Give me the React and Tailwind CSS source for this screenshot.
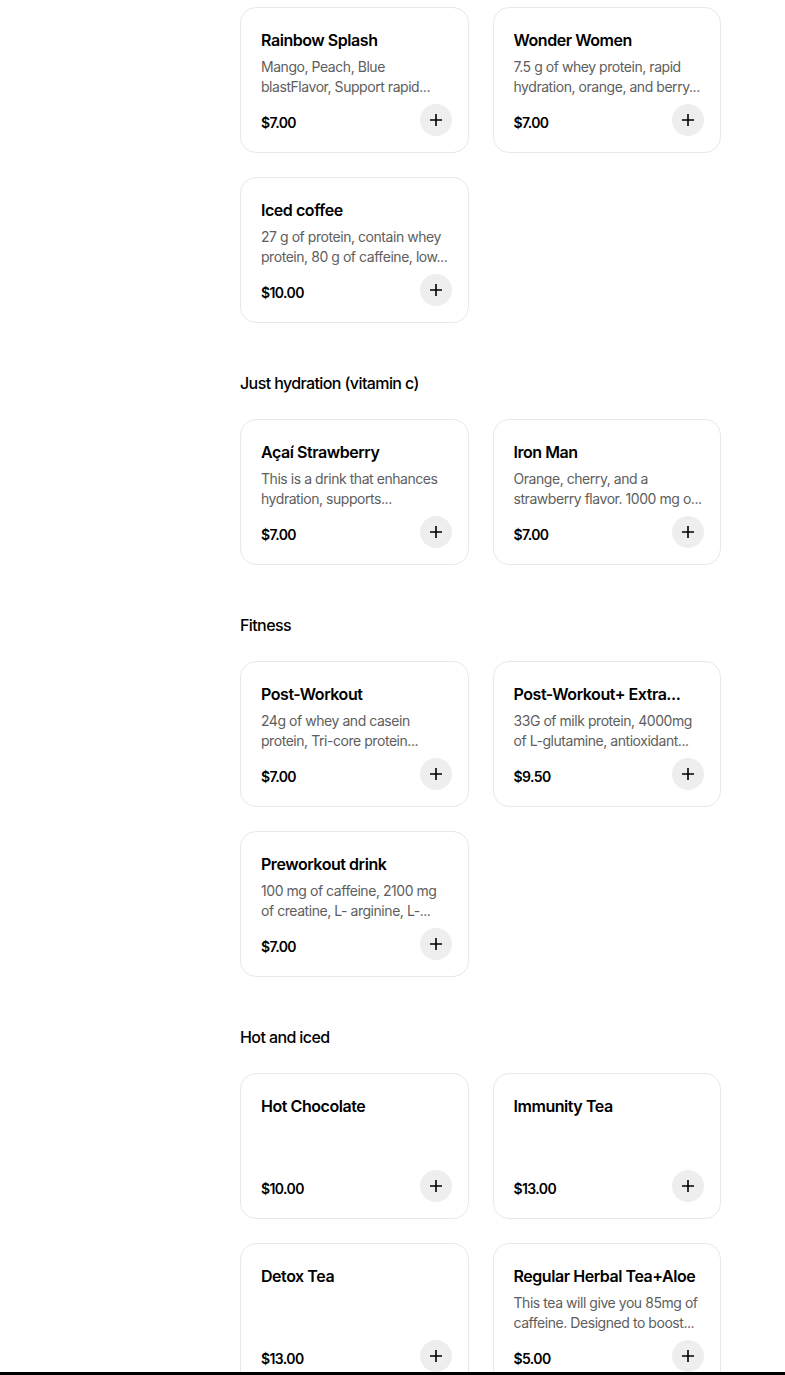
import React from "react";

const sections = [
  {
    title: null,
    items: [
      { name: "Rainbow Splash", desc: "Mango, Peach, Blue blastFlavor, Support rapid...", price: "$7.00" },
      { name: "Wonder Women", desc: "7.5 g of whey protein, rapid hydration, orange, and berry...", price: "$7.00" },
      { name: "Iced coffee", desc: "27 g of protein, contain whey protein, 80 g of caffeine, low...", price: "$10.00" },
    ],
  },
  {
    title: "Just hydration (vitamin c)",
    items: [
      { name: "Açaí Strawberry", desc: "This is a drink that enhances hydration, supports...", price: "$7.00" },
      { name: "Iron Man", desc: "Orange, cherry, and a strawberry flavor. 1000 mg o...", price: "$7.00" },
    ],
  },
  {
    title: "Fitness",
    items: [
      { name: "Post-Workout", desc: "24g of whey and casein protein, Tri-core protein...", price: "$7.00" },
      { name: "Post-Workout+ Extra...", desc: "33G of milk protein, 4000mg of L-glutamine, antioxidant...", price: "$9.50" },
      { name: "Preworkout drink", desc: "100 mg of caffeine, 2100 mg of creatine, L- arginine, L-...", price: "$7.00" },
    ],
  },
  {
    title: "Hot and iced",
    items: [
      { name: "Hot Chocolate", desc: "", price: "$10.00" },
      { name: "Immunity Tea", desc: "", price: "$13.00" },
      { name: "Detox Tea", desc: "", price: "$13.00" },
      { name: "Regular Herbal Tea+Aloe", desc: "This tea will give you 85mg of caffeine. Designed to boost...", price: "$5.00" },
    ],
  },
];

function PlusIcon() {
  return (
    <svg width="14" height="14" viewBox="0 0 14 14" fill="none">
      <path d="M7 1v12M1 7h12" stroke="#000" strokeWidth="1.6" />
    </svg>
  );
}

function Card({ item }) {
  return (
    <div className="flex flex-col rounded-2xl border border-[#e8e8e8] bg-white pl-5 pr-4 pt-5 pb-4">
      <div className="line-clamp-1 break-words text-[16px] font-semibold leading-6 text-black tracking-[-0.45px]">{item.name}</div>
      <div className="mt-[5px] h-10 line-clamp-2 text-[14px] leading-5 text-[#5e5e5e] tracking-[-0.45px]">{item.desc}</div>
      <div className="mt-[7px] flex items-end justify-between">
        <div className="mb-[3px] text-[14px] font-semibold leading-5 text-black tracking-[-0.6px]">{item.price}</div>
        <button className="flex h-8 w-8 items-center justify-center rounded-full bg-[#eeeeee]">
          <PlusIcon />
        </button>
      </div>
    </div>
  );
}

export default function App() {
  return (
    <div
      className="flex h-[1375px] flex-col overflow-hidden bg-white"
      style={{ fontFamily: "Inter, 'Liberation Sans', sans-serif" }}
    >
      <div className="flex-1 overflow-hidden pl-[240px] pr-[64px] pt-[7px]">
        {sections.map((s, i) => (
          <div key={i} className={i > 0 ? "mt-12" : ""}>
            {s.title && (
              <div className="mb-6 text-[16px] font-medium leading-6 text-black tracking-[-0.6px]">{s.title}</div>
            )}
            <div className="grid grid-cols-2 gap-6">
              {s.items.map((it, j) => (
                <Card key={j} item={it} />
              ))}
            </div>
          </div>
        ))}
      </div>
      <div className="h-[3px] shrink-0 bg-black" />
    </div>
  );
}
